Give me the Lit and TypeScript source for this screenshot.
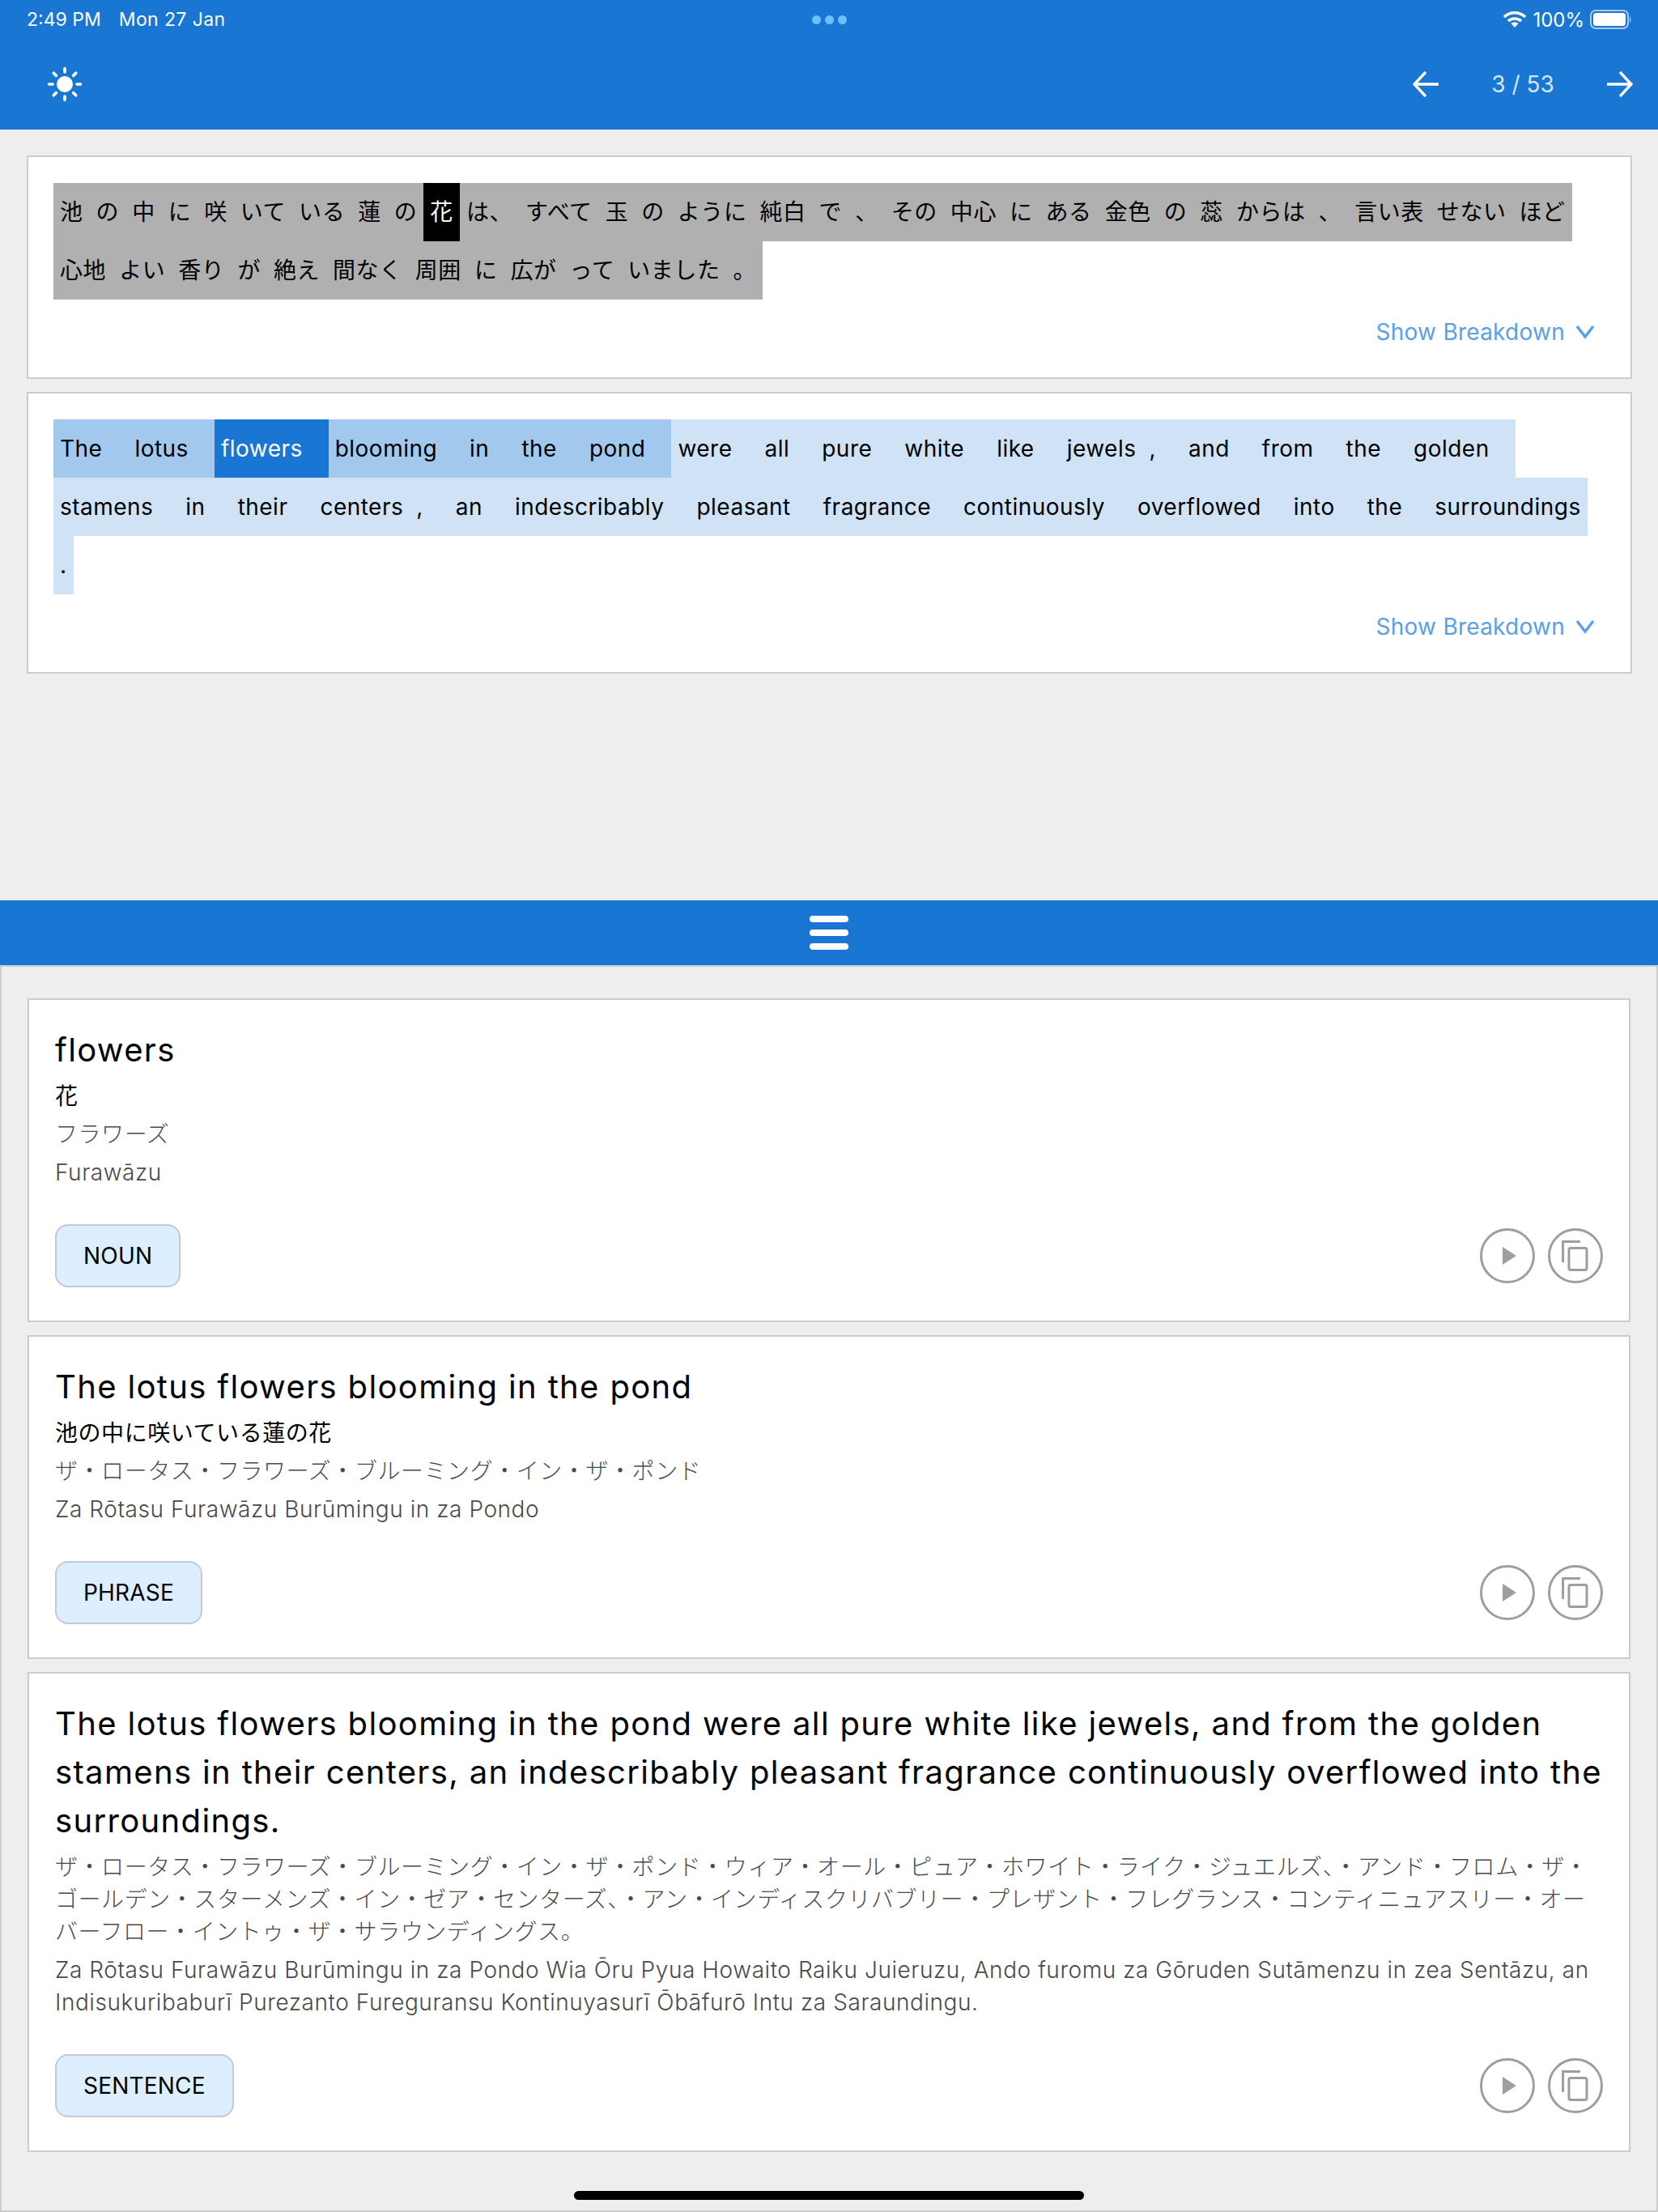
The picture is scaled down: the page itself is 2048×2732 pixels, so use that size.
import { LitElement, html, css, svg } from "lit";
import { customElement } from "lit/decorators.js";

type Tok = { t: string; s?: string; sp?: boolean };

const ja: Tok[] = "池 の 中 に 咲 いて いる 蓮 の 花 は、 すべて 玉 の ように 純白 で 、 その 中心 に ある 金色 の 蕊 からは 、 言い表 せない ほど 心地 よい 香り が 絶え 間なく 周囲 に 広が って いました 。"
  .split(" ")
  .map((t, i) => ({ t, s: i === 9 ? "sel-ja" : "" }));

const enWords = "The lotus flowers blooming in the pond were all pure white like jewels , and from the golden stamens in their centers , an indescribably pleasant fragrance continuously overflowed into the surroundings".split(" ");
const en: Tok[] = enWords.map((t, i) => ({
  t,
  sp: enWords[i + 1] !== undefined && enWords[i + 1] !== ",",
  s: i === 2 ? "sel-en" : i < 7 ? "phrase" : "",
}));

const chevron = html`<svg class="chev" width="24" height="20" viewBox="0 0 24 20"><path d="M2 3 L12 16 L22 3" fill="none" stroke="#5aa0e6" stroke-width="3.4"/></svg>`;

const playIcon = html`<svg width="68" height="68" viewBox="0 0 68 68"><circle cx="34" cy="34" r="32.5" fill="none" stroke="#9e9e9e" stroke-width="3"/><path d="M28 23 L45 34 L28 45 Z" fill="#9e9e9e"/></svg>`;
const copyIcon = html`<svg width="68" height="68" viewBox="0 0 68 68"><circle cx="34" cy="34" r="32.5" fill="none" stroke="#9e9e9e" stroke-width="3"/><path d="M18.6 42 V16.5 H40" fill="none" stroke="#9e9e9e" stroke-width="3"/><rect x="26" y="24.5" width="22" height="27" rx="2" fill="none" stroke="#9e9e9e" stroke-width="3"/></svg>`;

const rays = [0, 45, 90, 135, 180, 225, 270, 315].map(
  (a) => svg`<line x1="22" y1="2.5" x2="22" y2="7" stroke="#fff" stroke-width="3.6" stroke-linecap="round" transform="rotate(${a} 22 22)"/>`
);

@customElement("app-root")
export class AppRoot extends LitElement {
  static styles = css`
    :host {
      display: flex;
      flex-direction: column;
      width: 2048px;
      height: 2732px;
      position: relative;
      overflow: hidden;
      background: #eeeeee;
      color: #000;
      font-family: Inter, "Noto Sans CJK JP", sans-serif;
      font-weight: 400;
    }
    .header {
      height: 160px;
      background: #1976d2;
      color: #fff;
      display: flex;
      flex-direction: column;
      flex: none;
    }
    .status {
      height: 48px;
      display: grid;
      grid-template-columns: 1fr auto 1fr;
      align-items: center;
      padding: 0 32px 0 33px;
      font-size: 23px;
    }
    .status .left { display: flex; gap: 22px; }
    .status .date { letter-spacing: 0.4px; }
    .dots { display: flex; gap: 5px; }
    .dots i { width: 11px; height: 11px; border-radius: 50%; background: #6ec1ff; display: block; }
    .status .right { display: flex; justify-content: flex-end; align-items: center; gap: 7px; }
    .status .pct { font-size: 24px; }
    .toolbar {
      flex: 1;
      display: flex;
      align-items: center;
      justify-content: space-between;
      padding: 0 31px 0 58px;
    }
    .pager { display: flex; align-items: center; }
    .pager span { width: 208px; text-align: center; font-size: 28px; color: #d6e6f6; }
    .top {
      height: 952px;
      flex: none;
      padding: 32px 32px 0 33px;
      display: flex;
      flex-direction: column;
      gap: 16px;
      box-sizing: border-box;
    }
    .box {
      background: #fff;
      border: 2px solid #cccccc;
      padding: 32px 32px 32px 31px;
    }
    .tokens { display: flex; flex-wrap: wrap; font-size: 28px; letter-spacing: 0.56px; }
    .tokens.en { letter-spacing: 0.48px; }
    .tok { display: block; height: 72px; line-height: 72px; padding: 0 8px; white-space: nowrap; }
    .tok.sp { padding-right: 32px; }
    .brk { flex-basis: 100%; height: 0; }
    .on-ja { background: #b0b0b0; }
    .sel-ja { background: #000; color: #fff; }
    .sentence { background: #d0e3f6; }
    .phrase { background: #a2c8ee; }
    .sel-en { background: #1976d2; color: #fff; }
    .show {
      display: flex;
      justify-content: flex-end;
      align-items: center;
      gap: 13px;
      height: 48px;
      margin-top: 16px;
      padding-right: 12px;
      font-size: 28px;
      letter-spacing: 0.25px;
      color: #5aa0e6;
    }
    .bar {
      height: 80px;
      flex: none;
      background: #1976d2;
      display: flex;
      flex-direction: column;
      align-items: center;
      justify-content: center;
      gap: 9px;
    }
    .bar i { display: block; width: 48px; height: 8px; border-radius: 4px; background: #fff; }
    .bottom {
      flex: 1;
      border: 2px solid #cccccc;
      padding: 39px 32px 0 32px;
      display: flex;
      flex-direction: column;
      gap: 16px;
    }
    .card {
      background: #fff;
      border: 2px solid #cccccc;
      padding: 32px 32px 41px 32px;
    }
    .title { font-size: 40px; line-height: 60px; letter-spacing: 1.35px; }
    .line { font-size: 28px; line-height: 40px; margin-top: 7px; letter-spacing: 0.56px; }
    .sub { color: #4a4a4a; font-weight: 300; }
    .foot { display: flex; justify-content: space-between; align-items: center; margin-top: 44px; }
    .tag {
      box-sizing: border-box;
      height: 78px;
      display: flex;
      align-items: center;
      padding: 0 33px;
      background: #ddeeff;
      border: 2px solid #c3cad6;
      border-radius: 16px;
      font-size: 28px;
      letter-spacing: 0.2px;
    }
    .btns { display: flex; gap: 16px; }
    .btns svg { display: block; }
    .home {
      position: absolute;
      left: 709px;
      top: 2706px;
      width: 630px;
      height: 11px;
      border-radius: 6px;
      background: #000;
    }
  `;

  private card(title: string, lines: string[], sub: string[], tag: string) {
    return html`<div class="card">
      <div class="title">${title}</div>
      ${lines.map((l) => html`<div class="line">${l}</div>`)}
      ${sub.map((l) => html`<div class="line sub">${l}</div>`)}
      <div class="foot">
        <div class="tag">${tag}</div>
        <div class="btns">${playIcon}${copyIcon}</div>
      </div>
    </div>`;
  }

  render() {
    return html`
      <div class="header">
        <div class="status">
          <div class="left"><span>2:49 PM</span><span class="date">Mon 27 Jan</span></div>
          <div class="dots"><i></i><i></i><i></i></div>
          <div class="right">
            <svg width="30" height="22" viewBox="0 0 30 22"><path d="M2 8 C9 1 21 1 28 8" fill="none" stroke="#fff" stroke-width="3.4"/><path d="M7 13 C11 9 19 9 23 13" fill="none" stroke="#fff" stroke-width="3.4"/><path d="M10.5 16 C13 14 17 14 19.5 16 L15 21 Z" fill="#fff"/></svg>
            <span class="pct">100%</span>
            <svg width="52" height="24" viewBox="0 0 52 24"><rect x="1" y="1" width="46" height="22" rx="6" fill="none" stroke="#a6cbef" stroke-width="2"/><rect x="4" y="4" width="40" height="16" rx="3.5" fill="#fff"/><path d="M49 8 C51 9 51 15 49 16 Z" fill="#a6cbef"/></svg>
          </div>
        </div>
        <div class="toolbar">
          <svg width="44" height="44" viewBox="0 0 44 44"><circle cx="22" cy="22" r="10" fill="#fff"/>${rays}</svg>
          <div class="pager">
            <svg width="32" height="32" viewBox="0 0 32 32"><path d="M32 16 H3 M16 1 L2 16 L16 31" fill="none" stroke="#fff" stroke-width="3.4"/></svg>
            <span>3 / 53</span>
            <svg width="32" height="32" viewBox="0 0 32 32"><path d="M0 16 H29 M16 1 L30 16 L16 31" fill="none" stroke="#fff" stroke-width="3.4"/></svg>
          </div>
        </div>
      </div>
      <div class="top">
        <div class="box">
          <div class="tokens">
            ${ja.map((k) => html`<span class="tok ${k.s || "on-ja"}">${k.t}</span>`)}
          </div>
          <div class="show"><span>Show Breakdown</span>${chevron}</div>
        </div>
        <div class="box">
          <div class="tokens en">
            ${en.map((k) => html`<span class="tok ${k.sp ? "sp" : ""} ${k.s || "sentence"}">${k.t}</span>`)}
            <span class="brk"></span>
            <span class="tok sentence">.</span>
          </div>
          <div class="show"><span>Show Breakdown</span>${chevron}</div>
        </div>
      </div>
      <div class="bar"><i></i><i></i><i></i></div>
      <div class="bottom">
        ${this.card("flowers", ["花"], ["フラワーズ", "Furawāzu"], "NOUN")}
        ${this.card(
          "The lotus flowers blooming in the pond",
          ["池の中に咲いている蓮の花"],
          ["ザ・ロータス・フラワーズ・ブルーミング・イン・ザ・ポンド", "Za Rōtasu Furawāzu Burūmingu in za Pondo"],
          "PHRASE"
        )}
        ${this.card(
          "The lotus flowers blooming in the pond were all pure white like jewels, and from the golden stamens in their centers, an indescribably pleasant fragrance continuously overflowed into the surroundings.",
          [],
          [
            "ザ・ロータス・フラワーズ・ブルーミング・イン・ザ・ポンド・ウィア・オール・ピュア・ホワイト・ライク・ジュエルズ、・アンド・フロム・ザ・ゴールデン・スターメンズ・イン・ゼア・センターズ、・アン・インディスクリバブリー・プレザント・フレグランス・コンティニュアスリー・オーバーフロー・イントゥ・ザ・サラウンディングス。",
            "Za Rōtasu Furawāzu Burūmingu in za Pondo Wia Ōru Pyua Howaito Raiku Juieruzu, Ando furomu za Gōruden Sutāmenzu in zea Sentāzu, an Indisukuribaburī Purezanto Fureguransu Kontinuyasurī Ōbāfurō Intu za Saraundingu.",
          ],
          "SENTENCE"
        )}
      </div>
      <div class="home"></div>
    `;
  }
}
